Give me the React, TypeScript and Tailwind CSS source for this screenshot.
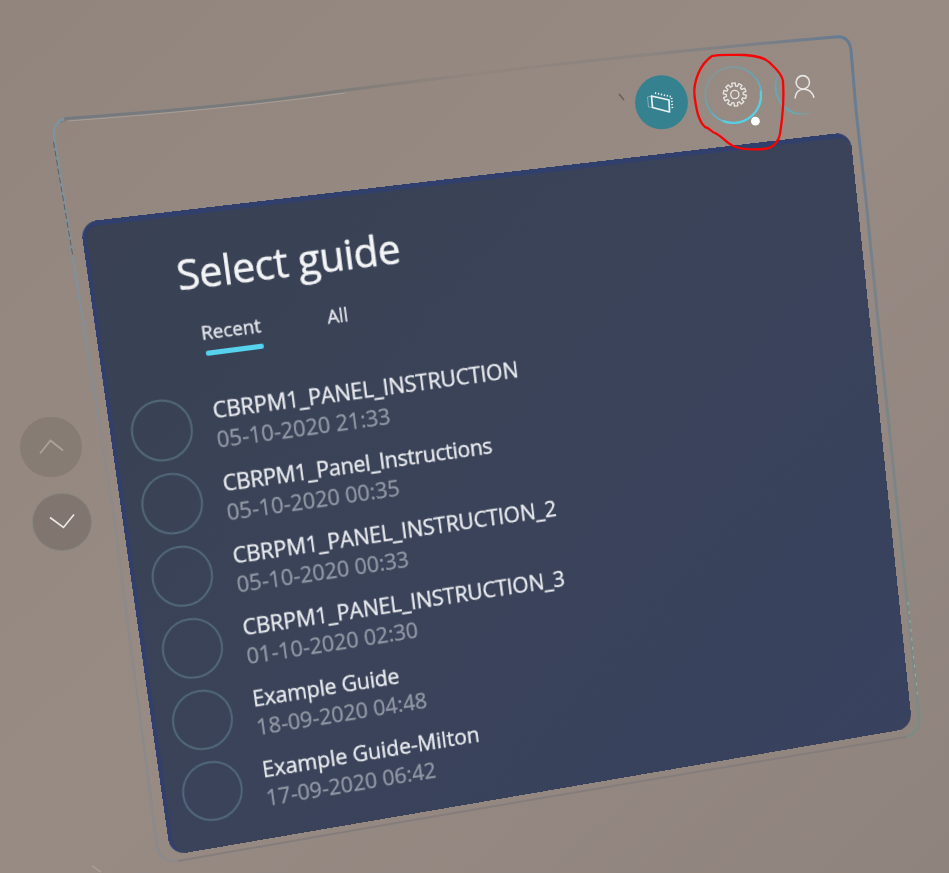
import React from 'react';

type Point = [number, number];

const PANEL_W = 800;
const PANEL_H = 625;
// Screen positions of the panel's corners: top left, top right, bottom right, bottom left.
const CORNERS: [Point, Point, Point, Point] = [
  [80.2, 222.3],
  [850.1, 131.8],
  [912.3, 727.9],
  [170.6, 855.4],
];

/** Projects a w x h rectangle onto four screen points. */
function project(w: number, h: number, [p0, p1, p2, p3]: [Point, Point, Point, Point]) {
  const dx1 = p1[0] - p2[0];
  const dx2 = p3[0] - p2[0];
  const dx3 = p0[0] - p1[0] + p2[0] - p3[0];
  const dy1 = p1[1] - p2[1];
  const dy2 = p3[1] - p2[1];
  const dy3 = p0[1] - p1[1] + p2[1] - p3[1];
  const det = dx1 * dy2 - dx2 * dy1;
  const g = (dx3 * dy2 - dx2 * dy3) / det;
  const k = (dx1 * dy3 - dx3 * dy1) / det;
  const a = p1[0] - p0[0] + g * p1[0];
  const b = p3[0] - p0[0] + k * p3[0];
  const d = p1[1] - p0[1] + g * p1[1];
  const e = p3[1] - p0[1] + k * p3[1];
  const m = [a / w, d / w, 0, g / w, b / h, e / h, 0, k / h, 0, 0, 1, 0, p0[0], p0[1], 0, 1];
  return `matrix3d(${m.map((v) => v.toFixed(8)).join(',')})`;
}

const guides = [
  { name: 'CBRPM1_PANEL_INSTRUCTION', date: '05-10-2020 21:33', tracking: 'tracking-[-0.1px]' },
  { name: 'CBRPM1_Panel_Instructions', date: '05-10-2020 00:35', tracking: 'tracking-[-0.32px]' },
  { name: 'CBRPM1_PANEL_INSTRUCTION_2', date: '05-10-2020 00:33', tracking: 'tracking-[-0.1px]' },
  { name: 'CBRPM1_PANEL_INSTRUCTION_3', date: '01-10-2020 02:30', tracking: 'tracking-[-0.1px]' },
  { name: 'Example Guide', date: '18-09-2020 04:48', tracking: 'tracking-[-0.25px]' },
  { name: 'Example Guide-Milton', date: '17-09-2020 06:42', tracking: 'tracking-[-0.02px]' },
];

function GuideRow({ name, date, tracking }: { name: string; date: string; tracking: string }) {
  return (
    <li className="flex h-[72px] items-center">
      <span className="h-[60px] w-[61px] shrink-0 rounded-full border-2 border-[#52697a]" />
      <span className="mt-[2px] ml-[22px] flex flex-col whitespace-nowrap text-[22px] leading-[29px]">
        <span className={`text-[#e9ebef] [-webkit-text-stroke:0.35px_#e9ebef] ${tracking}`}>{name}</span>
        <span className="text-[#9198a5] [-webkit-text-stroke:0.35px_#9198a5]">{date}</span>
      </span>
    </li>
  );
}

function GuidePanel() {
  return (
    <section
      className="absolute left-0 top-0 flex h-[625px] w-[800px] origin-top-left flex-col rounded-[16px] border-t-[5px] border-l-[4px] border-[#303f6c] bg-linear-to-br from-[#394153] via-[#3a4359] to-[#38415e] pl-[16px]"
      style={{ transform: project(PANEL_W, PANEL_H, CORNERS) }}
    >
      <h1 className="ml-[66px] mt-[29px] whitespace-nowrap text-[41px] leading-[52px] tracking-[-0.4px] text-[#f3f4f6] [-webkit-text-stroke:0.5px_#f3f4f6]">
        Select guide
      </h1>
      <nav className="ml-[82px] mt-[20px] flex h-[35px] gap-[67px] text-[18.7px] leading-[26px] text-[#e3e6ea] [-webkit-text-stroke:0.35px_#e3e6ea]">
        <span className="flex w-[60px] flex-col">
          Recent
          <span className="mt-[5px] ml-[2px] h-[5px] w-[58px] shrink-0 rounded-[2px] bg-[#56d3ee]" />
        </span>
        <span>All</span>
      </nav>
      <ul className="mt-[31px] flex flex-col">
        {guides.map((g) => (
          <GuideRow key={g.name} {...g} />
        ))}
      </ul>
    </section>
  );
}

/** Bounding outline of the holographic window. */
function Outline() {
  return (
    <svg className="absolute left-0 top-0" width="949" height="873" fill="none">
      <defs>
        <linearGradient id="top" x1="60" y1="118" x2="850" y2="38" gradientUnits="userSpaceOnUse">
          <stop stopColor="#747980" />
          <stop offset=".35" stopColor="#7d7b79" />
          <stop offset=".53" stopColor="#8a8079" stopOpacity=".3" />
          <stop offset=".75" stopColor="#837f7d" stopOpacity=".6" />
          <stop offset="1" stopColor="#667a92" />
        </linearGradient>
        <linearGradient id="left" x1="0" y1="118" x2="0" y2="860" gradientUnits="userSpaceOnUse">
          <stop stopColor="#7d929f" />
          <stop offset=".3" stopColor="#858e95" />
          <stop offset=".5" stopColor="#8a888c" stopOpacity=".7" />
          <stop offset="1" stopColor="#8b898c" />
        </linearGradient>
        <linearGradient id="right" x1="0" y1="36" x2="0" y2="740" gradientUnits="userSpaceOnUse">
          <stop stopColor="#647b94" />
          <stop offset=".4" stopColor="#7b8288" />
          <stop offset="1" stopColor="#7e8a84" />
        </linearGradient>
      </defs>
      <path d="M60 122Q64 118 72 118Q230 107 340 91Q590 58 835 37" stroke="url(#top)" strokeWidth="3" />
      <path d="M68 121Q230 109 345 93" stroke="#a59e97" strokeWidth="1" />
      <path d="M64 119Q53 122 54 136L75 270L113 510L151 800L157 846Q160 862 178 861" stroke="url(#left)" strokeWidth="2.5" />
      <path d="M53.500 142L73 257" stroke="#5e5f60" strokeWidth="1" strokeDasharray="6 3" />
      <path d="M835 37Q849 35 851 50L856 110L866 200L877 310L907 600L919 716Q921 732 906 737" stroke="url(#right)" strokeWidth="3" />
      <path d="M906 737L780 758Q450 813 178 861" stroke="#857d7c" strokeWidth="2" />
      <path d="M908 602L918 700" stroke="#9fb0a6" strokeWidth="1" strokeDasharray="3 6" />
      <path d="M619 94L624 100" stroke="#665b56" strokeWidth="1.3" />
      <path d="M92 866L101 872" stroke="#a69b95" strokeWidth="2" />
    </svg>
  );
}

function gearPath(cx: number, cy: number) {
  const teeth = 10;
  const pts: string[] = [];
  for (let i = 0; i < teeth; i++) {
    const base = (i / teeth) * Math.PI * 2 + 0.2;
    const step: Point[] = [
      [-0.2, 8.5],
      [-0.15, 11.6],
      [0.15, 11.6],
      [0.2, 8.5],
    ];
    for (const [off, r] of step) {
      pts.push(`${(cx + Math.cos(base + off) * r).toFixed(2)} ${(cy + Math.sin(base + off) * r).toFixed(2)}`);
    }
  }
  return `M${pts.join('L')}Z`;
}

function Toolbar() {
  return (
    <svg className="absolute left-[600px] top-[30px]" width="240" height="130" viewBox="600 30 240 130" fill="none">
      <defs>
        <linearGradient id="ring" x1="715" y1="72" x2="748" y2="120" gradientUnits="userSpaceOnUse">
          <stop stopColor="#7f9ba0" stopOpacity=".7" />
          <stop offset=".5" stopColor="#62a6b5" />
          <stop offset="1" stopColor="#58cfe2" />
        </linearGradient>
        <linearGradient id="arc" x1="776" y1="70" x2="811" y2="113" gradientUnits="userSpaceOnUse">
          <stop stopColor="#6fa5af" stopOpacity=".2" />
          <stop offset=".25" stopColor="#62a8b6" />
          <stop offset=".8" stopColor="#68aab5" />
          <stop offset="1" stopColor="#7fa0a3" stopOpacity=".3" />
        </linearGradient>
      </defs>
      <ellipse cx="661.5" cy="102.3" rx="26.4" ry="27" fill="#35818f" />
      <g stroke="#eaf3f4" strokeLinejoin="round">
        <path d="M651.5 96L669 100L669.500 112L652.500 107.500Z" strokeWidth="1.7" />
        <path d="M647.500 97L648.500 107L652.500 107.500M647.500 97L651.5 96" strokeWidth=".8" opacity=".5" />
        <path d="M655 93L671.5 96.8L672.5 109.5" strokeWidth="1.8" strokeDasharray="1.3 1.7" />
      </g>
      <circle cx="733.3" cy="95" r="28" stroke="url(#ring)" strokeWidth="1.8" />
      <path d="M760.8 91A28 28 0 0 1 723 121" stroke="#5ccce0" strokeWidth="2.2" />
      <g stroke="#e5e2df" strokeWidth="1.4" strokeLinejoin="round">
        <path d={gearPath(734.8, 94.5)} />
        <circle cx="734.8" cy="94.5" r="4.1" />
      </g>
      <circle cx="755.4" cy="121.2" r="4.4" fill="#fff" />
      <path d="M779 70C772 86 776 101 787 109C794 114.500 803 115 811 112.500" stroke="url(#arc)" strokeWidth="2" />
      <g stroke="#e9e5e2" strokeWidth="1.6">
        <circle cx="802.8" cy="82.3" r="6.7" />
        <path d="M795 98.5C795.5 92.5 799 89.2 803.6 89.2C808.5 89.2 812.5 92 814 97.8" />
      </g>
      <path
        d="M712 56C720 54 735 55 745 55C757 56 765 58 769 62C774 67 782 73 783 81C784 95 783 115 780 134C778 143 772 148 764 149C752 150 740 149 733 146C725 142 722 136 715 133C711 132 710 128 705 127C698 121 696 107 694.500 96C693 82 700 64 712 56Z"
        stroke="#f60505"
        strokeWidth="2.3"
      />
    </svg>
  );
}

function ScrollButtons() {
  return (
    <div className="absolute left-[20px] top-[417px] flex flex-col gap-[16px]">
      <button className="flex h-[60px] w-[62px] items-center justify-center rounded-full bg-[#877c74]">
        <svg width="26" height="18" viewBox="0 0 26 18" fill="none" stroke="#ada39a" strokeWidth="1.7">
          <path d="M2 15.500L12.500 2.500L25 12.500" />
        </svg>
      </button>
      <button className="ml-[12px] flex h-[58px] w-[60px] items-center justify-center rounded-full border border-[#868780] bg-[#81766f]">
        <svg width="26" height="18" viewBox="0 0 26 18" fill="none" stroke="#ece8e5" strokeWidth="1.6">
          <path d="M1 4.500L14.500 14.500L25 1.500" />
        </svg>
      </button>
    </div>
  );
}

export default function App() {
  return (
    <main className="relative h-[873px] w-[949px] overflow-hidden bg-linear-to-br from-[#91857d] via-[#978b84] to-[#8f847d] font-['Open_Sans','Noto_Sans',sans-serif]">
      <Outline />
      <ScrollButtons />
      <GuidePanel />
      <Toolbar />
    </main>
  );
}
